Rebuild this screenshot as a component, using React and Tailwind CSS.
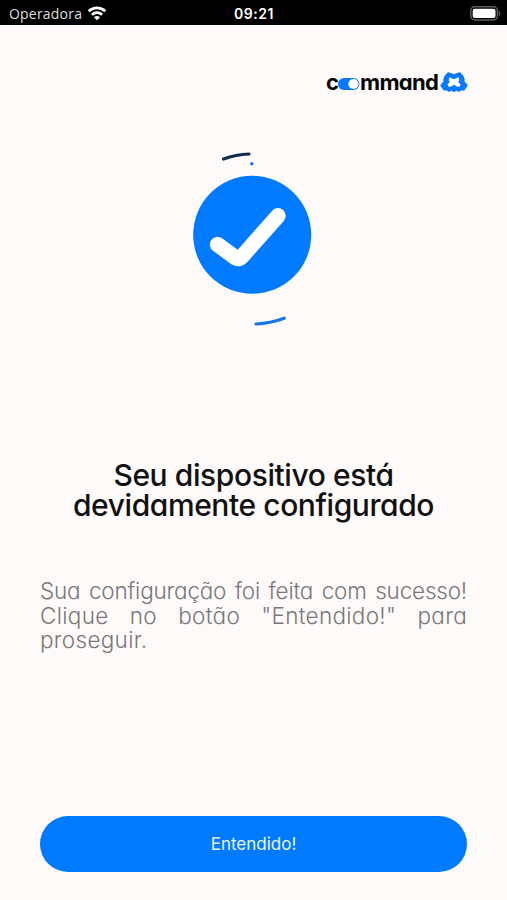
function Wifi() {
  return (
    <svg className="ml-[5px] h-[15px] w-[20px]" viewBox="0 0 20 15" fill="none" stroke="#fff" strokeWidth="2.7">
      <path d="M1.7 5.2C6.4.7 13.6.7 18.3 5.2" />
      <path d="M4.9 8.8c2.9-2.8 7.3-2.8 10.2 0" />
      <path d="M7 11.2c1.7-1.6 4.3-1.6 6 0L10 14.3Z" fill="#fff" stroke="none" />
    </svg>
  );
}

function Battery() {
  return (
    <svg className="h-[15px] w-[31px]" viewBox="0 0 31 15">
      <rect x="0.8" y="0.8" width="26.6" height="13.2" rx="4" fill="none" stroke="#5c5c5c" strokeWidth="1.5" />
      <rect x="2.7" y="2.7" width="22.8" height="9.4" rx="2" fill="#fff" />
      <path d="M28.8 5v5c1.6-.6 1.6-4.4 0-5Z" fill="#6c6c6c" />
    </svg>
  );
}

function Logo() {
  return (
    <div className="-mr-[1px] flex h-[24px] items-center font-[Inter,sans-serif] text-[22px] font-bold leading-[24px] text-[#080808] [font-feature-settings:'cv11']">
      <span className="w-[12px]">c</span>
      <svg className="mt-[3px] h-[14px] w-[22px]" viewBox="0 0 22 14">
        <rect x="0" y="1" width="21.4" height="12" rx="6" fill="#0878fe" />
        <circle cx="15.4" cy="7" r="5.1" fill="#fff" />
      </svg>
      <span className="w-[80px] whitespace-nowrap tracking-[-0.7px]">mmand</span>
      <svg className="mb-[1px] h-[22px] w-[28px]" viewBox="0 0 28 22">
        <path
          d="M8.3 2 14 4l5.7-2 3 3.4 1.3 3.4-.6 1.4 3.5 4.1-3 4.4-3-.2-2.1 1.5-2.4-1.3-2.4 1.5-2.4-1.5-2.4 1.3-2.1-1.5-3 .2-3-4.4 3.5-4.1L4 8.8l1.3-3.4Z"
          fill="#0878fe"
          stroke="#0878fe"
          strokeWidth="1.6"
          strokeLinejoin="round"
        />
        <path d="M9.3 6.2 14 8.2l4.7-2 .5 3.2-1 1.4 2.4 3-1.2 2-2.6-.2-2.8-1.8-2.8 1.8-2.6.2-1.2-2 2.4-3-1-1.4Z" fill="#fff" />
      </svg>
    </div>
  );
}

function Success() {
  return (
    <svg className="h-[195px] w-[145px] shrink-0" viewBox="0 0 145 195" fill="none" strokeLinecap="round">
      <path d="M43.5 19Q56 14.5 69 14" stroke="#102b4b" strokeWidth="3.2" />
      <circle cx="71.8" cy="23.8" r="1.7" fill="#0878fe" />
      <circle cx="72.2" cy="94.8" r="59" fill="#007aff" />
      <path d="m37.5 104.5 18 13.2q3.5 2.2 6.3-1L98 75.8" stroke="#fff" strokeWidth="15.4" strokeLinejoin="round" />
      <path d="M76 184q14-.7 28.3-5.8" stroke="#1776e5" strokeWidth="3.2" />
    </svg>
  );
}

export default function App() {
  return (
    <div className="flex h-[900px] w-[507px] flex-col overflow-hidden bg-[#fffafa] font-[Inter,sans-serif]">
      <header className="grid h-[25px] shrink-0 grid-cols-3 items-center bg-black pl-[9px] pr-[6px] text-white">
        <div className="flex items-center pt-[2px] font-['Open_Sans',sans-serif] text-[14px] tracking-[0.2px] text-[#dedede]">
          <span>Operadora</span>
          <Wifi />
        </div>
        <span className="pr-[2px] pt-[2px] text-center text-[14px] font-semibold tracking-[0.5px]">09:21</span>
        <div className="flex justify-end pt-[1px]">
          <Battery />
        </div>
      </header>
      <main className="flex min-h-0 grow flex-col px-[40px] pb-[28px] pt-[45px]">
        <div className="flex justify-end">
          <Logo />
        </div>
        <div className="mt-[46px] flex justify-center pr-[2px]">
          <Success />
        </div>
        <h1 className="mt-[125px] text-center font-[Inter,sans-serif] text-[30px] font-medium leading-[30px] tracking-[-0.42px] text-[#111] [font-feature-settings:'cv11']">
          Seu dispositivo está
          <br />
          devidamente configurado
        </h1>
        <p className="mt-[59px] text-justify font-[Inter,sans-serif] text-[22.5px] font-light leading-[24.5px] tracking-[-0.2px] text-[#777] [font-feature-settings:'cv11']">
          Sua configuração foi feita com sucesso!{" "}
          <span className="tracking-[0.3px]">Clique no botão "Entendido!" para proseguir.</span>
        </p>
        <button className="mt-auto h-[56px] w-full shrink-0 rounded-full bg-[#007aff] pt-[1px] text-[17px] text-[#eef7ff]">
          Entendido!
        </button>
      </main>
    </div>
  );
}
